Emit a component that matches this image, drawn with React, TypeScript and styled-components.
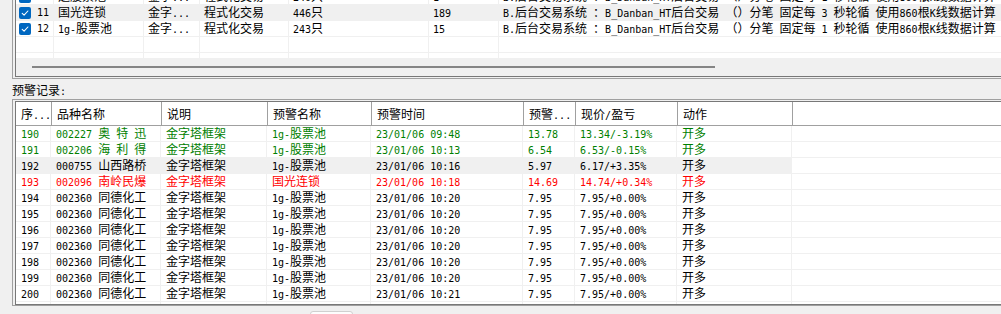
import React from "react";
import styled, { createGlobalStyle } from "styled-components";

const GlobalStyle = createGlobalStyle`
  html, body {
    margin: 0;
    padding: 0;
    background: #f0f0f0;
    overflow: hidden;
  }
  body {
    font-family: "Noto Sans CJK SC", "Noto Sans", sans-serif;
    font-size: 12px;
    color: #000;
  }
`;

const Page = styled.div`
  width: 1001px;
  height: 314px;
  overflow: hidden;
  background: #f0f0f0;
`;

// half-width run, about 6px per glyph like the bitmap font in the original
const Half = styled.span`
  font-family: "DejaVu Sans Mono", "Liberation Mono", monospace;
  font-size: 10px;
  line-height: 0;
`;

function Txt({ text }: { text: string }) {
  const parts = text.match(/[\x20-\x7e]+|[^\x20-\x7e]+/g) ?? [];
  return (
    <>
      {parts.map((p, i) =>
        /^[\x20-\x7e]/.test(p) ? <Half key={i}>{p}</Half> : <React.Fragment key={i}>{p}</React.Fragment>
      )}
    </>
  );
}

const Frame = styled.div<{ $pad: string; $mt: number }>`
  margin: ${(p) => p.$mt}px 0 0 12px;
  width: 1100px;
  border: 1px solid #a0a0a0;
  border-right: none;
  padding: ${(p) => p.$pad};
`;

const Inner = styled.div`
  border: 1px solid #787878;
  border-right: none;
  background: #fff;
`;

/* ---------- top list ---------- */

const TopBody = styled.div`
  height: 69px;
  overflow: hidden;
`;

const TopRow = styled.div<{ $sel?: boolean }>`
  display: flex;
  height: 15px;
  border-bottom: 1px solid #f0f0f0;
  background: ${(p) => (p.$sel ? "#f0f0f0" : "#fff")};
`;

const TopCell = styled.div<{ $w?: number }>`
  box-sizing: border-box;
  flex: ${(p) => (p.$w ? `0 0 ${p.$w}px` : "1 0 700px")};
  border-left: 1px solid #f0f0f0;
  padding-left: 4px;
  line-height: 14px;
  white-space: pre;
`;

const CheckCell = styled.div`
  box-sizing: border-box;
  flex: 0 0 37px;
  display: flex;
  align-items: center;
  gap: 6px;
  padding-left: 3px;
  line-height: 14px;
  white-space: pre;
`;

const Box = styled.span`
  display: inline-flex;
  width: 12px;
  height: 12px;
  border-radius: 2px;
  background: #0067c0;
  flex-shrink: 0;
`;

const Track = styled.div`
  height: 18px;
  background: #f0f0f0;
  display: flex;
  align-items: center;
  padding-left: 16px;
`;

const Thumb = styled.div`
  width: 683px;
  height: 2px;
  background: #858585;
`;

/* ---------- caption ---------- */

const Caption = styled.div`
  box-sizing: border-box;
  height: 20px;
  padding: 2px 0 0 12px;
  line-height: 18px;
  white-space: pre;
`;

/* ---------- alert list ---------- */

const HeadRow = styled.div`
  display: flex;
  height: 23px;
  border-bottom: 1px solid #a0a0a0;
`;

const HeadCell = styled.div<{ $w?: number; $first?: boolean }>`
  box-sizing: border-box;
  flex: ${(p) => (p.$w ? `0 0 ${p.$w}px` : "1 0 200px")};
  border-left: ${(p) => (p.$first ? "none" : "1px solid #a0a0a0")};
  padding-left: 5px;
  line-height: 23px;
  white-space: pre;
`;

const Body = styled.div`
  height: 178px;
  overflow: hidden;
`;

const Row = styled.div`
  display: flex;
  height: 15px;
  border-bottom: 1px solid #f0f0f0;
  background: #fff;
`;

const toneColor = { black: "#000", green: "#008000", red: "#ff0000" };
type Tone = keyof typeof toneColor;

const Cell = styled.div<{ $w?: number; $first?: boolean; $sel?: boolean; $tone: Tone }>`
  box-sizing: border-box;
  flex: ${(p) => (p.$w ? `0 0 ${p.$w}px` : "1 0 200px")};
  border-left: ${(p) => (p.$first ? "none" : "1px solid #f0f0f0")};
  padding-left: 5px;
  line-height: 14px;
  white-space: pre;
  color: ${(p) => toneColor[p.$tone]};
  background: ${(p) => (p.$sel ? "#f0f0f0" : "transparent")};
`;

const Footer = styled.div`
  padding: 5px 0 0 310px;
`;

const Btn = styled.div`
  width: 43px;
  height: 20px;
  box-sizing: border-box;
  border: 1px solid #d0d0d0;
  border-radius: 3px;
  background: #fdfdfd;
`;

function Check() {
  return (
    <Box>
      <svg width="12" height="12" viewBox="0 0 12 12">
        <path d="M3.2 6.3 L5.1 8.1 L8.9 4" fill="none" stroke="#fff" strokeWidth="1.1" strokeLinecap="round" strokeLinejoin="round" />
      </svg>
    </Box>
  );
}

const topWidths = [90, 56, 89, 140, 70];

const sys = (n: number) =>
  `B.后台交易系统 ：B_Danban_HT后台交易 （）分笔 固定每 ${n} 秒轮循 使用860根K线数据计算`;

const strategies: { no: string; cells: string[]; sel?: boolean; check: boolean }[] = [
  { no: "10", check: true, cells: ["选股票池", "金字...", "程式化交易", "240只", "1", sys(1)] },
  { no: "11", check: true, sel: true, cells: ["国光连锁", "金字...", "程式化交易", "446只", "189", sys(3)] },
  { no: "12", check: true, cells: ["1g-股票池", "金字...", "程式化交易", "243只", "15", sys(1)] },
  { no: "", check: false, cells: ["", "", "", "", "", ""] },
  { no: "", check: false, cells: ["", "", "", "", "", ""] },
];

const cols = [
  { title: "序...", w: 34 },
  { title: "品种名称", w: 110 },
  { title: "说明", w: 106 },
  { title: "预警名称", w: 104 },
  { title: "预警时间", w: 152 },
  { title: "预警...", w: 52 },
  { title: "现价/盈亏", w: 102 },
  { title: "动作", w: 115 },
];

type Alert = { cells: string[]; tone: Tone; sel?: boolean };

const same = (no: string, time: string): Alert => ({
  tone: "black",
  cells: [no, "002360 同德化工", "金字塔框架", "1g-股票池", `23/01/06 ${time}`, "7.95", "7.95/+0.00%", "开多"],
});

const alerts: Alert[] = [
  { tone: "green", cells: ["190", "002227 奥 特 迅", "金字塔框架", "1g-股票池", "23/01/06 09:48", "13.78", "13.34/-3.19%", "开多"] },
  { tone: "green", cells: ["191", "002206 海 利 得", "金字塔框架", "1g-股票池", "23/01/06 10:13", "6.54", "6.53/-0.15%", "开多"] },
  { tone: "black", sel: true, cells: ["192", "000755 山西路桥", "金字塔框架", "1g-股票池", "23/01/06 10:16", "5.97", "6.17/+3.35%", "开多"] },
  { tone: "red", cells: ["193", "002096 南岭民爆", "金字塔框架", "国光连锁", "23/01/06 10:18", "14.69", "14.74/+0.34%", "开多"] },
  same("194", "10:20"),
  same("195", "10:20"),
  same("196", "10:20"),
  same("197", "10:20"),
  same("198", "10:20"),
  same("199", "10:20"),
  same("200", "10:21"),
  { tone: "black", cells: ["", "", "", "", "", "", "", ""] },
];

export default function App() {
  return (
    <Page>
      <GlobalStyle />
      <Frame $mt={-15} $pad="2px 0 1px 2px">
        <Inner>
          <TopBody>
            {strategies.map((s, i) => (
              <TopRow key={i} $sel={s.sel}>
                <CheckCell>
                  {s.check && <Check />}
                  <Txt text={s.no} />
                </CheckCell>
                {s.cells.map((c, j) => (
                  <TopCell key={j} $w={topWidths[j]}>
                    <Txt text={c} />
                  </TopCell>
                ))}
              </TopRow>
            ))}
          </TopBody>
          <Track>
            <Thumb />
          </Track>
        </Inner>
      </Frame>

      <Caption>
        <Txt text="预警记录:" />
      </Caption>

      <Frame $mt={0} $pad="1px 0 0 2px">
        <Inner>
          <HeadRow>
            {cols.map((c, i) => (
              <HeadCell key={i} $w={c.w} $first={i === 0}>
                <Txt text={c.title} />
              </HeadCell>
            ))}
            <HeadCell />
          </HeadRow>
          <Body>
            {alerts.map((a, i) => (
              <Row key={i}>
                {a.cells.map((c, j) => (
                  <Cell key={j} $w={cols[j].w} $first={j === 0} $sel={a.sel} $tone={a.tone}>
                    <Txt text={c} />
                  </Cell>
                ))}
                <Cell $tone="black" />
              </Row>
            ))}
          </Body>
        </Inner>
      </Frame>

      <Footer>
        <Btn />
      </Footer>
    </Page>
  );
}
